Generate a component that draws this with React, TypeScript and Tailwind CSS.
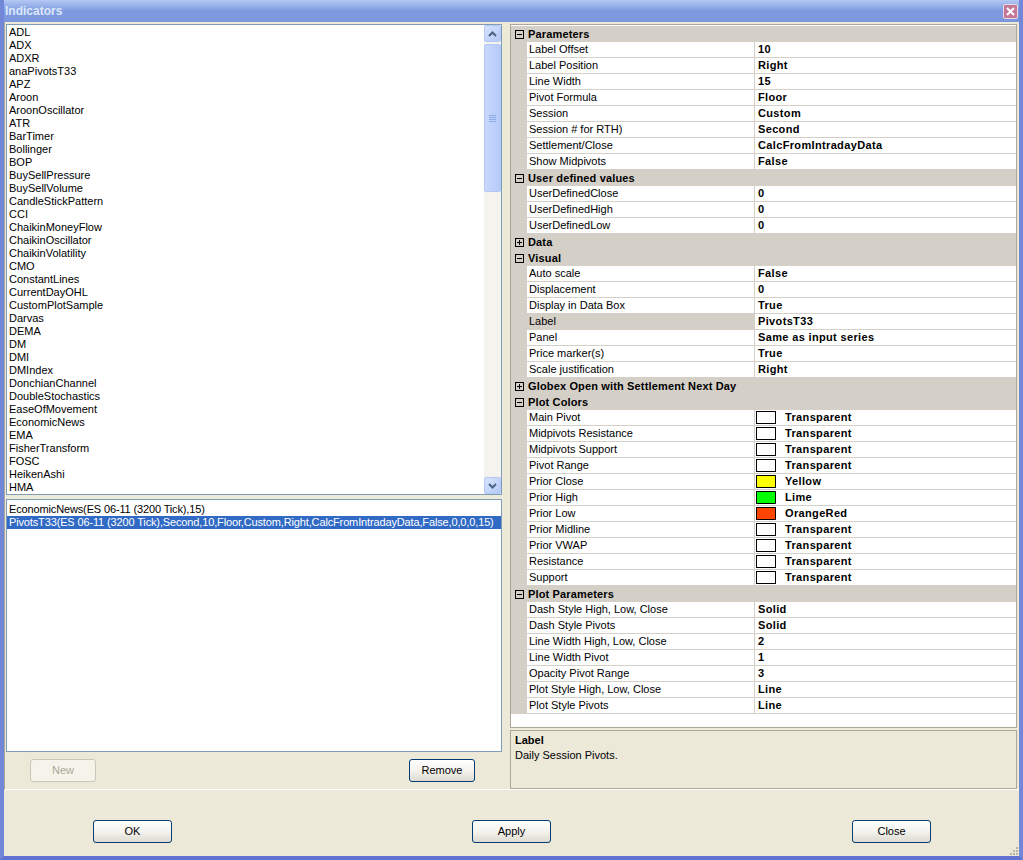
// "Indicators" dialog — XP-style window with indicator list, applied list and a property grid.
import React from "react";

const FONT = { fontFamily: '"Liberation Sans", Arial, sans-serif' };

const INDICATORS = [
  "ADL", "ADX", "ADXR", "anaPivotsT33", "APZ", "Aroon", "AroonOscillator", "ATR", "BarTimer",
  "Bollinger", "BOP", "BuySellPressure", "BuySellVolume", "CandleStickPattern", "CCI",
  "ChaikinMoneyFlow", "ChaikinOscillator", "ChaikinVolatility", "CMO", "ConstantLines",
  "CurrentDayOHL", "CustomPlotSample", "Darvas", "DEMA", "DM", "DMI", "DMIndex",
  "DonchianChannel", "DoubleStochastics", "EaseOfMovement", "EconomicNews", "EMA",
  "FisherTransform", "FOSC", "HeikenAshi", "HMA",
];

type Row =
  | { kind: "cat"; label: string; open: boolean }
  | { kind: "prop"; name: string; value: string; swatch?: string; selected?: boolean };

const cat = (label: string, open = true): Row => ({ kind: "cat", label, open });
const prop = (name: string, value: string, swatch?: string): Row => ({ kind: "prop", name, value, swatch });

const ROWS: Row[] = [
  cat("Parameters"),
  prop("Label Offset", "10"),
  prop("Label Position", "Right"),
  prop("Line Width", "15"),
  prop("Pivot Formula", "Floor"),
  prop("Session", "Custom"),
  prop("Session # for RTH)", "Second"),
  prop("Settlement/Close", "CalcFromIntradayData"),
  prop("Show Midpivots", "False"),
  cat("User defined values"),
  prop("UserDefinedClose", "0"),
  prop("UserDefinedHigh", "0"),
  prop("UserDefinedLow", "0"),
  cat("Data", false),
  cat("Visual"),
  prop("Auto scale", "False"),
  prop("Displacement", "0"),
  prop("Display in Data Box", "True"),
  { kind: "prop", name: "Label", value: "PivotsT33", selected: true },
  prop("Panel", "Same as input series"),
  prop("Price marker(s)", "True"),
  prop("Scale justification", "Right"),
  cat("Globex Open with Settlement Next Day", false),
  cat("Plot Colors"),
  prop("Main Pivot", "Transparent", "#ffffff"),
  prop("Midpivots Resistance", "Transparent", "#ffffff"),
  prop("Midpivots Support", "Transparent", "#ffffff"),
  prop("Pivot Range", "Transparent", "#ffffff"),
  prop("Prior Close", "Yellow", "#ffff00"),
  prop("Prior High", "Lime", "#00ff00"),
  prop("Prior Low", "OrangeRed", "#ff4500"),
  prop("Prior Midline", "Transparent", "#ffffff"),
  prop("Prior VWAP", "Transparent", "#ffffff"),
  prop("Resistance", "Transparent", "#ffffff"),
  prop("Support", "Transparent", "#ffffff"),
  cat("Plot Parameters"),
  prop("Dash Style High, Low, Close", "Solid"),
  prop("Dash Style Pivots", "Solid"),
  prop("Line Width High, Low, Close", "2"),
  prop("Line Width Pivot", "1"),
  prop("Opacity Pivot Range", "3"),
  prop("Plot Style High, Low, Close", "Line"),
  prop("Plot Style Pivots", "Line"),
];

function XpButton({ label, width, disabled }: { label: string; width: string; disabled?: boolean }) {
  return (
    <button
      type="button"
      disabled={disabled}
      className={
        "h-[23px] rounded-[3px] border text-[11px] leading-none " +
        width +
        (disabled
          ? " border-[#c9c7ba] bg-[#f5f4ea] text-[#aca899]"
          : " border-[#003c74] bg-gradient-to-b from-white via-[#f4f3ee] to-[#dcdad0] text-black")
      }
    >
      {label}
    </button>
  );
}

function ScrollBtn({ dir }: { dir: "up" | "down" }) {
  return (
    <div className="flex h-[17px] w-[17px] items-center justify-center rounded-[2px] border border-[#b4c8f6] bg-gradient-to-br from-[#d8e4fd] to-[#b3c9f7]">
      <svg width="9" height="6" viewBox="0 0 9 6">
        <path
          d={dir === "up" ? "M1 5 L4.5 1.5 L8 5" : "M1 1 L4.5 4.5 L8 1"}
          fill="none"
          stroke="#4d6185"
          strokeWidth="2"
        />
      </svg>
    </div>
  );
}

function Scrollbar() {
  return (
    <div className="flex w-[17px] flex-col bg-[#f4f3ee]">
      <ScrollBtn dir="up" />
      <div className="mt-[2px] flex h-[148px] items-center justify-center rounded-[2px] border border-[#b4c8f6] bg-gradient-to-r from-[#c9d8fc] to-[#b6cbf9]">
        <div className="flex flex-col gap-[1px]">
          {[0, 1, 2, 3].map((i) => (
            <div key={i} className="h-[1px] w-[7px] bg-[#8caae8]" />
          ))}
        </div>
      </div>
      <div className="flex-1" />
      <ScrollBtn dir="down" />
    </div>
  );
}

function ExpandBox({ open }: { open: boolean }) {
  return (
    <div className="relative h-[9px] w-[9px] border border-black bg-transparent">
      <div className="absolute left-[1px] top-[3px] h-[1px] w-[5px] bg-black" />
      {!open && <div className="absolute left-[3px] top-[1px] h-[5px] w-[1px] bg-black" />}
    </div>
  );
}

function GridRow({ row }: { row: Row }) {
  if (row.kind === "cat") {
    return (
      <div className="flex h-[16px] shrink-0 items-center bg-[#d4d0c8]">
        <div className="flex w-[16px] justify-center">
          <ExpandBox open={row.open} />
        </div>
        <span className="pl-[1px] text-[11px] font-bold tracking-[0.15px] text-black">{row.label}</span>
      </div>
    );
  }
  return (
    <div className="flex h-[16px] shrink-0">
      <div className="w-[16px] bg-[#d4d0c8]" />
      <div
        className={
          "w-[228px] whitespace-nowrap border-b border-r border-[#d4d0c8] pl-[2px] text-[11px] leading-[15px] text-black " +
          (row.selected ? "bg-[#d4d0c8]" : "bg-white")
        }
      >
        {row.name}
      </div>
      <div className="flex flex-1 items-center whitespace-nowrap border-b border-[#d4d0c8] bg-white pl-[1px] text-[11px] font-bold leading-[15px] tracking-[0.35px] text-black">
        {row.swatch && (
          <span
            className="mr-[9px] h-[13px] w-[20px] border border-black"
            style={{ backgroundColor: row.swatch }}
          />
        )}
        <span className={row.swatch ? "" : "pl-[2px]"}>{row.value}</span>
      </div>
    </div>
  );
}

export default function App() {
  return (
    <div
      className="flex h-[860px] w-[1023px] flex-col overflow-hidden border-x-4 border-b-4 border-x-[#7387d8] border-b-[#6272d2] bg-[#ece9d8]"
      style={FONT}
    >
      {/* title bar */}
      <div className="-mx-[4px] flex h-[22px] shrink-0 items-center justify-between bg-gradient-to-b from-[#b4c8f4] via-[#7f9be0] to-[#7c96de] pl-[5px] pr-[5px]">
        <span className="text-[12px] font-bold text-[#dde7fa]">Indicators</span>
        <div className="flex h-[15px] w-[15px] items-center justify-center rounded-[2px] border border-[#e8d9e6] bg-[#c47896]">
          <svg width="9" height="9" viewBox="0 0 9 9">
            <path d="M1 1 L8 8 M8 1 L1 8" stroke="white" strokeWidth="2" />
          </svg>
        </div>
      </div>

      {/* main area */}
      <div className="flex h-[768px] shrink-0 border-b border-b-white border-l border-l-[#aca899] pt-[2px]">
        {/* left column */}
        <div className="flex w-[497px] flex-col pl-[1px]">
          <div className="flex h-[471px] border border-[#7f9db9] bg-white">
            <div className="flex-1 overflow-hidden pl-[2px] pt-[1px]">
              {INDICATORS.map((n) => (
                <div key={n} className="h-[13px] text-[11px] leading-[13px] text-black">
                  {n}
                </div>
              ))}
            </div>
            <Scrollbar />
          </div>
          <div className="mt-[4px] h-[253px] overflow-hidden border border-[#7f9db9] bg-white pt-[3px]">
            <div className="h-[13px] whitespace-nowrap pl-[2px] text-[11px] leading-[13px] tracking-[-0.14px] text-black">
              EconomicNews(ES 06-11 (3200 Tick),15)
            </div>
            <div className="h-[13px] whitespace-nowrap bg-[#316ac5] pl-[2px] text-[11px] leading-[13px] tracking-[-0.14px] text-white">
              PivotsT33(ES 06-11 (3200 Tick),Second,10,Floor,Custom,Right,CalcFromIntradayData,False,0,0,0,15)
            </div>
          </div>
          <div className="flex items-center pt-[7px]">
            <div className="w-[24px]" />
            <XpButton label="New" width="w-[66px]" disabled />
            <div className="w-[313px]" />
            <XpButton label="Remove" width="w-[66px]" />
          </div>
        </div>

        {/* splitter */}
        <div className="w-[8px]" />

        {/* right column */}
        <div className="flex w-[507px] flex-col">
          <div className="flex h-[704px] flex-col overflow-hidden border border-[#aca899] bg-white pt-[1px]">
            {ROWS.map((r, i) => (
              <GridRow key={i} row={r} />
            ))}
          </div>
          <div className="mt-[2px] h-[59px] border border-[#aca899] bg-[#ece9d8] px-[4px] pt-[2px] text-[11px] leading-[15px] text-black">
            <div className="font-bold">Label</div>
            <div>Daily Session Pivots.</div>
          </div>
        </div>
      </div>

      {/* bottom buttons */}
      <div className="relative flex flex-1 items-start pt-[30px]">
        <div className="w-[89px]" />
        <XpButton label="OK" width="w-[79px]" />
        <div className="w-[300px]" />
        <XpButton label="Apply" width="w-[79px]" />
        <div className="w-[301px]" />
        <XpButton label="Close" width="w-[79px]" />
        <div className="absolute bottom-[1px] right-[1px] grid grid-cols-3 gap-[1px]">
          {[0, 0, 1, 0, 1, 1, 1, 1, 1].map((v, i) => (
            <div key={i} className={"h-[2px] w-[2px] " + (v ? "bg-[#b8b4a2]" : "")} />
          ))}
        </div>
      </div>
    </div>
  );
}
